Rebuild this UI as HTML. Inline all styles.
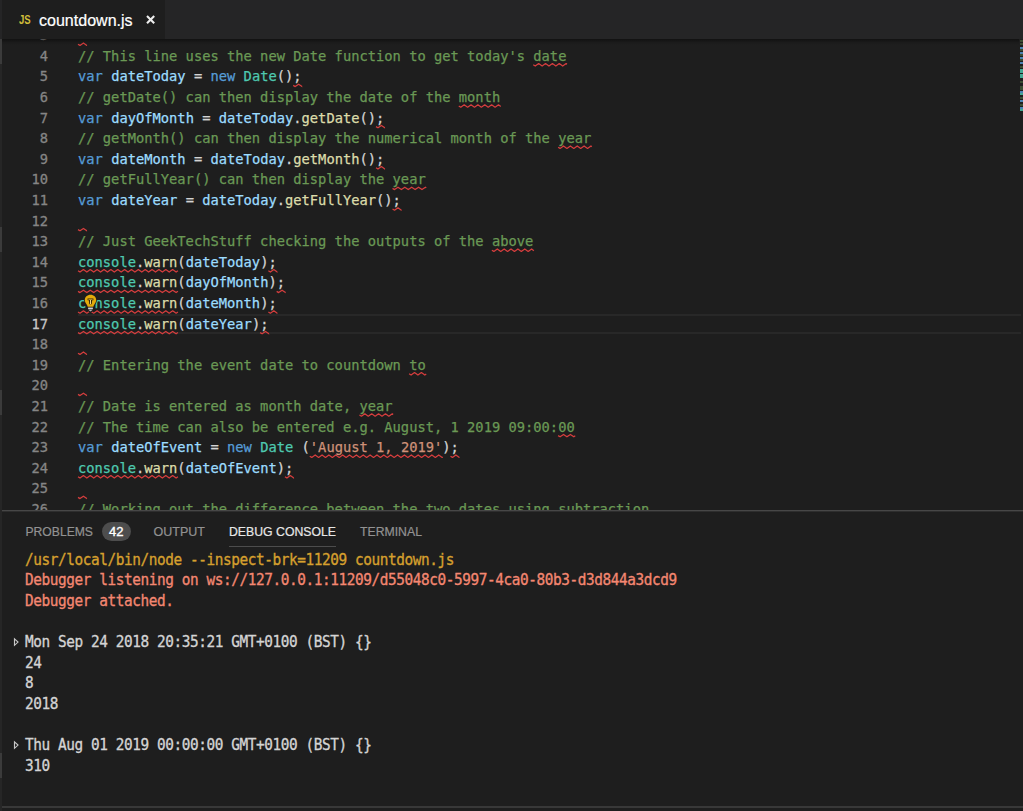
<!DOCTYPE html>
<html lang="en"><head><meta charset="utf-8"><title>countdown.js</title>
<style>
html,body{margin:0;padding:0;background:#1e1e1e;}
body{width:1023px;height:811px;overflow:hidden;position:relative;font-family:"Liberation Sans","DejaVu Sans",sans-serif;}
.abs{position:absolute}
.mono{font-family:"DejaVu Sans Mono","Liberation Mono",monospace;}
.ln{position:absolute;left:0;width:48.1px;-webkit-text-stroke:0.3px currentColor;text-align:right;color:#858585;font-size:13.75px;line-height:20.60px;height:20.60px;white-space:pre}
.cl{position:absolute;left:78.00px;font-size:13.75px;line-height:20.60px;height:20.60px;white-space:pre;color:#d4d4d4;-webkit-text-stroke:0.25px currentColor}
.cl span{-webkit-text-stroke:0.25px currentColor}
.c{color:#6a9955}
.k{color:#569cd6}
.v{color:#9cdcfe}
.t{color:#4ec9b0}
.f{color:#dcdcaa}
.s{color:#ce9178}
.p{color:#d4d4d4}

#tabbar{position:absolute;left:0;top:0;width:1023px;height:39px;background:#252526}
#tab{position:absolute;left:2px;top:0;width:163px;height:39px;background:#1e1e1e}
#tabname{position:absolute;left:39px;top:0.5px;height:39px;line-height:39px;font-size:16.05px;-webkit-text-stroke:0.2px #fff;color:#fff;white-space:pre}
#jsicon{position:absolute;left:18.5px;top:0;height:39px;line-height:40.5px;font-size:12px;font-weight:bold;color:#d1bd3a;letter-spacing:-0.2px;transform:scaleX(0.8);transform-origin:0 50%}
#editor{position:absolute;left:2px;top:39px;width:1021px;height:471px;overflow:hidden;background:#1e1e1e}
#edinner{position:absolute;left:-2px;top:-39px;width:1023px;height:811px}
#shadow{position:absolute;left:2px;top:39px;width:1017px;height:6px;background:linear-gradient(rgba(0,0,0,.42),rgba(0,0,0,.12) 55%,rgba(0,0,0,0))}
#panel{position:absolute;left:2px;top:510px;width:1021px;height:301px;background:#1e1e1e;border-top:1px solid #474747;box-sizing:border-box}
.pt{position:absolute;top:522px;-webkit-text-stroke:0.2px currentColor;height:20px;line-height:20px;font-size:12.3px;color:#929292;white-space:pre}
.co{position:absolute;left:25.1px;font-size:14.4px;letter-spacing:-0.414px;line-height:20.6px;height:20.6px;white-space:pre;color:#d4d4d4;-webkit-text-stroke:0.3px currentColor;transform:scaleY(1.055);transform-origin:0 74.2%}
</style></head><body>
<div class="abs" style="left:0;top:0;width:2px;height:811px;background:#262626"></div>
<div class="abs" style="left:0;top:38px;width:2px;height:26px;background:#3b3b3b"></div>
<div class="abs" style="left:0;top:227px;width:2px;height:25px;background:#3b3b3b"></div>
<div class="abs" style="left:0;top:390px;width:2px;height:25px;background:#3b3b3b"></div>
<div class="abs" style="left:0;top:753px;width:2px;height:25px;background:#3b3b3b"></div>
<div id="tabbar"><div id="tab"></div><div id="jsicon">JS</div><div id="tabname">countdown.js</div><svg class="abs" style="left:144.6px;top:13px" width="12" height="12" viewBox="0 0 12 12"><path d="M2 3 L9.200 10.200 M9.200 3 L2 10.200" stroke="#ededed" stroke-width="2.1" fill="none"/></svg></div>
<div id="editor"><div id="edinner">
<div class="abs" style="left:78px;top:313.50px;width:943px;height:20.60px;box-sizing:border-box;border-top:2px solid #282828;border-bottom:2px solid #282828"></div>
<div class="ln mono" style="top:25.10px">3</div>
<div class="ln mono" style="top:45.70px">4</div><div class="cl mono" style="top:45.70px"><span class="c">// This line uses the new Date function to get today's date</span></div>
<div class="ln mono" style="top:66.30px">5</div><div class="cl mono" style="top:66.30px"><span class="k">var</span><span class="p"> </span><span class="v">dateToday</span><span class="p"> = </span><span class="k">new</span><span class="p"> </span><span class="t">Date</span><span class="p">();</span></div>
<div class="ln mono" style="top:86.90px">6</div><div class="cl mono" style="top:86.90px"><span class="c">// getDate() can then display the date of the month</span></div>
<div class="ln mono" style="top:107.50px">7</div><div class="cl mono" style="top:107.50px"><span class="k">var</span><span class="p"> </span><span class="v">dayOfMonth</span><span class="p"> = </span><span class="v">dateToday</span><span class="p">.</span><span class="f">getDate</span><span class="p">();</span></div>
<div class="ln mono" style="top:128.10px">8</div><div class="cl mono" style="top:128.10px"><span class="c">// getMonth() can then display the numerical month of the year</span></div>
<div class="ln mono" style="top:148.70px">9</div><div class="cl mono" style="top:148.70px"><span class="k">var</span><span class="p"> </span><span class="v">dateMonth</span><span class="p"> = </span><span class="v">dateToday</span><span class="p">.</span><span class="f">getMonth</span><span class="p">();</span></div>
<div class="ln mono" style="top:169.30px">10</div><div class="cl mono" style="top:169.30px"><span class="c">// getFullYear() can then display the year</span></div>
<div class="ln mono" style="top:189.90px">11</div><div class="cl mono" style="top:189.90px"><span class="k">var</span><span class="p"> </span><span class="v">dateYear</span><span class="p"> = </span><span class="v">dateToday</span><span class="p">.</span><span class="f">getFullYear</span><span class="p">();</span></div>
<div class="ln mono" style="top:210.50px">12</div>
<div class="ln mono" style="top:231.10px">13</div><div class="cl mono" style="top:231.10px"><span class="c">// Just GeekTechStuff checking the outputs of the above</span></div>
<div class="ln mono" style="top:251.70px">14</div><div class="cl mono" style="top:251.70px"><span class="t">console</span><span class="p">.</span><span class="f">warn</span><span class="p">(</span><span class="v">dateToday</span><span class="p">);</span></div>
<div class="ln mono" style="top:272.30px">15</div><div class="cl mono" style="top:272.30px"><span class="t">console</span><span class="p">.</span><span class="f">warn</span><span class="p">(</span><span class="v">dayOfMonth</span><span class="p">);</span></div>
<div class="ln mono" style="top:292.90px">16</div><div class="cl mono" style="top:292.90px"><span class="t">console</span><span class="p">.</span><span class="f">warn</span><span class="p">(</span><span class="v">dateMonth</span><span class="p">);</span></div>
<div class="ln mono" style="top:313.50px;color:#c6c6c6">17</div><div class="cl mono" style="top:313.50px"><span class="t">console</span><span class="p">.</span><span class="f">warn</span><span class="p">(</span><span class="v">dateYear</span><span class="p">);</span></div>
<div class="ln mono" style="top:334.10px">18</div>
<div class="ln mono" style="top:354.70px">19</div><div class="cl mono" style="top:354.70px"><span class="c">// Entering the event date to countdown to</span></div>
<div class="ln mono" style="top:375.30px">20</div>
<div class="ln mono" style="top:395.90px">21</div><div class="cl mono" style="top:395.90px"><span class="c">// Date is entered as month date, year</span></div>
<div class="ln mono" style="top:416.50px">22</div><div class="cl mono" style="top:416.50px"><span class="c">// The time can also be entered e.g. August, 1 2019 09:00:00</span></div>
<div class="ln mono" style="top:437.10px">23</div><div class="cl mono" style="top:437.10px"><span class="k">var</span><span class="p"> </span><span class="v">dateOfEvent</span><span class="p"> = </span><span class="k">new</span><span class="p"> </span><span class="t">Date</span><span class="p"> (</span><span class="s">'August 1, 2019'</span><span class="p">);</span></div>
<div class="ln mono" style="top:457.70px">24</div><div class="cl mono" style="top:457.70px"><span class="t">console</span><span class="p">.</span><span class="f">warn</span><span class="p">(</span><span class="v">dateOfEvent</span><span class="p">);</span></div>
<div class="ln mono" style="top:478.30px">25</div>
<div class="ln mono" style="top:498.90px">26</div><div class="cl mono" style="top:498.90px"><span class="c">// Working out the difference between the two dates using subtraction</span></div>
<svg class="abs" style="left:0;top:0" width="1023" height="811" viewBox="0 0 1023 811" fill="none" stroke="#d63e3e" stroke-width="1.25" stroke-linejoin="round" stroke-linecap="butt">
<path d="M78.00 44.20L79.99 45.40L83.42 43.00L86.85 45.40L86.88 45.38"/>
<path d="M78.00 229.60L79.99 230.80L83.42 228.40L86.85 230.80L86.88 230.78"/>
<path d="M78.00 353.20L79.99 354.40L83.42 352.00L86.85 354.40L86.88 354.38"/>
<path d="M78.00 394.40L79.99 395.60L83.42 393.20L86.85 395.60L86.88 395.58"/>
<path d="M78.00 497.40L79.99 498.60L83.42 496.20L86.85 498.60L86.88 498.58"/>
<path d="M533.26 64.80L535.25 66.00L538.69 63.60L542.12 66.00L545.55 63.60L548.98 66.00L552.41 63.60L555.85 66.00L559.28 63.60L562.71 66.00L566.14 63.60L566.97 64.29"/>
<path d="M458.76 106.00L460.76 107.20L464.19 104.80L467.62 107.20L471.05 104.80L474.48 107.20L477.92 104.80L481.35 107.20L484.78 104.80L488.21 107.20L491.64 104.80L495.08 107.20L498.51 104.80L500.75 106.48"/>
<path d="M558.10 147.20L560.09 148.40L563.52 146.00L566.95 148.40L570.38 146.00L573.81 148.40L577.25 146.00L580.68 148.40L584.11 146.00L587.54 148.40L590.97 146.00L591.81 146.69"/>
<path d="M392.55 188.40L394.54 189.60L397.97 187.20L401.40 189.60L404.83 187.20L408.26 189.60L411.70 187.20L415.13 189.60L418.56 187.20L421.99 189.60L425.42 187.20L426.26 187.89"/>
<path d="M491.88 250.20L493.87 251.40L497.30 249.00L500.73 251.40L504.16 249.00L507.59 251.40L511.03 249.00L514.46 251.40L517.89 249.00L521.32 251.40L524.75 249.00L528.19 251.40L531.62 249.00L533.86 250.68"/>
<path d="M409.10 373.80L411.09 375.00L414.52 372.60L417.95 375.00L421.39 372.60L424.82 375.00L426.26 374.00"/>
<path d="M359.44 415.00L361.43 416.20L364.86 413.80L368.29 416.20L371.72 413.80L375.15 416.20L378.59 413.80L382.02 416.20L385.45 413.80L388.88 416.20L392.31 413.80L393.15 414.49"/>
<path d="M558.10 435.60L560.09 436.80L563.52 434.40L566.95 436.80L570.38 434.40L573.81 436.80L575.25 435.80"/>
<path d="M293.22 85.40L295.21 86.60L298.64 84.20L302.07 86.60L302.09 86.58"/>
<path d="M375.99 126.60L377.98 127.80L381.41 125.40L384.84 127.80L384.87 127.78"/>
<path d="M375.99 167.80L377.98 169.00L381.41 166.60L384.84 169.00L384.87 168.98"/>
<path d="M392.55 209.00L394.54 210.20L397.97 207.80L401.40 210.20L401.42 210.18"/>
<path d="M268.38 270.80L270.37 272.00L273.81 269.60L277.24 272.00L277.26 271.98"/>
<path d="M276.66 291.40L278.65 292.60L282.08 290.20L285.51 292.60L285.54 292.58"/>
<path d="M268.38 312.00L270.37 313.20L273.81 310.80L277.24 313.20L277.26 313.18"/>
<path d="M260.11 332.60L262.10 333.80L265.53 331.40L268.96 333.80L268.98 333.78"/>
<path d="M450.49 456.20L452.48 457.40L455.91 455.00L459.34 457.40L459.37 457.38"/>
<path d="M284.94 476.80L286.93 478.00L290.36 475.60L293.79 478.00L293.81 477.98"/>
<path d="M78.00 270.80L79.99 272.00L83.42 269.60L86.85 272.00L90.29 269.60L93.72 272.00L97.15 269.60L100.58 272.00L104.01 269.60L107.45 272.00L110.88 269.60L114.31 272.00L117.74 269.60L121.17 272.00L124.61 269.60L128.04 272.00L131.47 269.60L134.90 272.00L138.33 269.60L141.77 272.00L145.20 269.60L148.63 272.00L152.06 269.60L155.49 272.00L158.93 269.60L162.36 272.00L165.79 269.60L169.22 272.00L172.65 269.60L176.09 272.00L177.93 270.71"/>
<path d="M78.00 291.40L79.99 292.60L83.42 290.20L86.85 292.60L90.29 290.20L93.72 292.60L97.15 290.20L100.58 292.60L104.01 290.20L107.45 292.60L110.88 290.20L114.31 292.60L117.74 290.20L121.17 292.60L124.61 290.20L128.04 292.60L131.47 290.20L134.90 292.60L138.33 290.20L141.77 292.60L145.20 290.20L148.63 292.60L152.06 290.20L155.49 292.60L158.93 290.20L162.36 292.60L165.79 290.20L169.22 292.60L172.65 290.20L176.09 292.60L177.93 291.31"/>
<path d="M78.00 312.00L79.99 313.20L83.42 310.80L86.85 313.20L90.29 310.80L93.72 313.20L97.15 310.80L100.58 313.20L104.01 310.80L107.45 313.20L110.88 310.80L114.31 313.20L117.74 310.80L121.17 313.20L124.61 310.80L128.04 313.20L131.47 310.80L134.90 313.20L138.33 310.80L141.77 313.20L145.20 310.80L148.63 313.20L152.06 310.80L155.49 313.20L158.93 310.80L162.36 313.20L165.79 310.80L169.22 313.20L172.65 310.80L176.09 313.20L177.93 311.91"/>
<path d="M78.00 332.60L79.99 333.80L83.42 331.40L86.85 333.80L90.29 331.40L93.72 333.80L97.15 331.40L100.58 333.80L104.01 331.40L107.45 333.80L110.88 331.40L114.31 333.80L117.74 331.40L121.17 333.80L124.61 331.40L128.04 333.80L131.47 331.40L134.90 333.80L138.33 331.40L141.77 333.80L145.20 331.40L148.63 333.80L152.06 331.40L155.49 333.80L158.93 331.40L162.36 333.80L165.79 331.40L169.22 333.80L172.65 331.40L176.09 333.80L177.93 332.51"/>
<path d="M78.00 476.80L79.99 478.00L83.42 475.60L86.85 478.00L90.29 475.60L93.72 478.00L97.15 475.60L100.58 478.00L104.01 475.60L107.45 478.00L110.88 475.60L114.31 478.00L117.74 475.60L121.17 478.00L124.61 475.60L128.04 478.00L131.47 475.60L134.90 478.00L138.33 475.60L141.77 478.00L145.20 475.60L148.63 478.00L152.06 475.60L155.49 478.00L158.93 475.60L162.36 478.00L165.79 475.60L169.22 478.00L172.65 475.60L176.09 478.00L177.93 476.71"/>
<path d="M309.77 456.20L311.76 457.40L315.19 455.00L318.62 457.40L322.06 455.00L325.49 457.40L328.92 455.00L332.35 457.40L335.78 455.00L339.22 457.40L342.65 455.00L346.08 457.40L349.51 455.00L352.94 457.40L356.38 455.00L359.81 457.40L363.24 455.00L366.67 457.40L370.10 455.00L373.54 457.40L376.97 455.00L380.40 457.40L383.83 455.00L387.26 457.40L390.70 455.00L394.13 457.40L397.56 455.00L400.99 457.40L404.42 455.00L407.86 457.40L411.29 455.00L414.72 457.40L418.15 455.00L421.58 457.40L425.02 455.00L428.45 457.40L431.88 455.00L435.31 457.40L438.74 455.00L442.18 457.40L442.81 456.96"/>
</svg>
<svg class="abs" style="left:83px;top:293.00px" width="15" height="19" viewBox="-1 -1 15 19"><path d="M6.500 0.700c-3.300 0-5.700 2.400-5.700 5.400 0 1.500 0.700 2.700 1.400 3.700 0.700 1 1.300 1.900 1.500 3v2.800l2.800 2.400 2.800-2.400v-2.800c0.200-1.100 0.800-2 1.500-3 0.700-1 1.400-2.200 1.400-3.700 0-3-2.400-5.400-5.700-5.400z" fill="#1e1e1e" stroke="#1e1e1e" stroke-width="1.600" stroke-linejoin="round"/><path d="M6.500 0.700c-3.300 0-5.700 2.400-5.700 5.400 0 1.500 0.700 2.700 1.400 3.700 0.700 1 1.300 1.900 1.500 3h5.600c0.200-1.100 0.800-2 1.500-3 0.700-1 1.400-2.200 1.400-3.700 0-3-2.400-5.400-5.700-5.400z" fill="#e3ab0a"/><path d="M3.600 4.600h5.800v1.700h-1.200l-0.500 4h-2.400l-0.500-4h-1.200z" fill="#33270a"/><rect x="6" y="6" width="1" height="4" fill="#f0d684"/><rect x="4.400" y="5" width="4.200" height="0.800" fill="#c9a437"/><rect x="4.100" y="13.600" width="4.800" height="1.300" fill="#e0e0e0"/><path d="M4.100 15.500h4.800l-2.400 2z" fill="#b0b0b0"/></svg>
</div></div>
<div id="shadow"></div>
<div class="abs" style="left:1020.4px;top:40px;width:2.6px;height:2px;background:#6a9955;opacity:.38"></div><div class="abs" style="left:1020.4px;top:43px;width:2.6px;height:2px;background:#6a9955;opacity:.38"></div><div class="abs" style="left:1020.4px;top:47px;width:2.6px;height:2px;background:#569cd6;opacity:.8"></div><div class="abs" style="left:1020.4px;top:49px;width:2.6px;height:2px;background:#6a9955;opacity:.38"></div><div class="abs" style="left:1020.4px;top:52px;width:2.6px;height:2px;background:#569cd6;opacity:.8"></div><div class="abs" style="left:1020.4px;top:54px;width:2.6px;height:2px;background:#6a9955;opacity:.38"></div><div class="abs" style="left:1020.4px;top:57px;width:2.6px;height:2px;background:#569cd6;opacity:.8"></div><div class="abs" style="left:1020.4px;top:59px;width:2.6px;height:2px;background:#6a9955;opacity:.38"></div><div class="abs" style="left:1020.4px;top:62px;width:2.6px;height:2px;background:#569cd6;opacity:.8"></div><div class="abs" style="left:1020.4px;top:66px;width:2.6px;height:2px;background:#6a9955;opacity:.38"></div><div class="abs" style="left:1020.4px;top:69px;width:2.6px;height:2px;background:#4ec9b0;opacity:.8"></div><div class="abs" style="left:1020.4px;top:71px;width:2.6px;height:2px;background:#4ec9b0;opacity:.8"></div><div class="abs" style="left:1020.4px;top:74px;width:2.6px;height:2px;background:#4ec9b0;opacity:.8"></div><div class="abs" style="left:1020.4px;top:76px;width:2.6px;height:2px;background:#4ec9b0;opacity:.8"></div><div class="abs" style="left:1020.4px;top:81px;width:2.6px;height:2px;background:#6a9955;opacity:.38"></div><div class="abs" style="left:1020.4px;top:86px;width:2.6px;height:2px;background:#6a9955;opacity:.38"></div><div class="abs" style="left:1020.4px;top:88px;width:2.6px;height:2px;background:#6a9955;opacity:.38"></div><div class="abs" style="left:1020.4px;top:91px;width:2.6px;height:2px;background:#569cd6;opacity:.8"></div><div class="abs" style="left:1020.4px;top:93px;width:2.6px;height:2px;background:#4ec9b0;opacity:.8"></div><div class="abs" style="left:1020.4px;top:97px;width:2.6px;height:2px;background:#6a9955;opacity:.38"></div><div class="abs" style="left:1020.4px;top:100px;width:2.6px;height:2px;background:#569cd6;opacity:.8"></div><div class="abs" style="left:1020.4px;top:104px;width:2.6px;height:2px;background:#6a9955;opacity:.38"></div><div class="abs" style="left:1020.4px;top:107px;width:2.6px;height:2px;background:#569cd6;opacity:.8"></div><div class="abs" style="left:1020.4px;top:109px;width:2.6px;height:2px;background:#4ec9b0;opacity:.8"></div>
<div id="panel"></div>
<div class="abs" style="left:2px;top:511px;width:1021px;height:1px;background:#2e2e2e"></div>
<div class="pt" style="left:25.5px;font-size:12.15px">PROBLEMS</div><div class="abs" style="left:102px;top:522px;width:28.5px;height:19px;border-radius:9.5px;background:#4d4d4d;color:#fff;font-size:13px;-webkit-text-stroke:0.35px #fff;line-height:20px;text-align:center">42</div><div class="pt" style="left:153.5px;font-size:12.5px">OUTPUT</div><div class="pt" style="left:229px;color:#e7e7e7;font-size:12.27px">DEBUG CONSOLE</div><div class="abs" style="left:229px;top:546px;width:107px;height:1px;background:#4c4c4c"></div><div class="pt" style="left:360px;font-size:12.26px">TERMINAL</div>
<div class="co mono" style="top:549.70px;color:#d6a02e">/usr/local/bin/node --inspect-brk=11209 countdown.js</div>
<div class="co mono" style="top:570.30px;color:#f48771">Debugger listening on ws://127.0.0.1:11209/d55048c0-5997-4ca0-80b3-d3d844a3dcd9</div>
<div class="co mono" style="top:590.90px;color:#f48771">Debugger attached.</div>
<div class="co mono" style="top:632.10px;color:#d4d4d4">Mon Sep 24 2018 20:35:21 GMT+0100 (BST) {}</div>
<div class="co mono" style="top:652.70px;color:#d4d4d4">24</div>
<div class="co mono" style="top:673.30px;color:#d4d4d4">8</div>
<div class="co mono" style="top:693.90px;color:#d4d4d4">2018</div>
<div class="co mono" style="top:735.10px;color:#d4d4d4">Thu Aug 01 2019 00:00:00 GMT+0100 (BST) {}</div>
<div class="co mono" style="top:755.70px;color:#d4d4d4">310</div>
<svg class="abs" style="left:12px;top:637.40px" width="8" height="10" viewBox="0 0 8 10"><path d="M2.500 1.900 L6 5.100 L2.500 8.300z" fill="none" stroke="#c8c8c8" stroke-width="1.15"/></svg>
<svg class="abs" style="left:12px;top:740.40px" width="8" height="10" viewBox="0 0 8 10"><path d="M2.500 1.900 L6 5.100 L2.500 8.300z" fill="none" stroke="#c8c8c8" stroke-width="1.15"/></svg>
<div class="abs" style="left:2px;top:806px;width:1021px;height:2px;background:#383838"></div>
</body></html>
